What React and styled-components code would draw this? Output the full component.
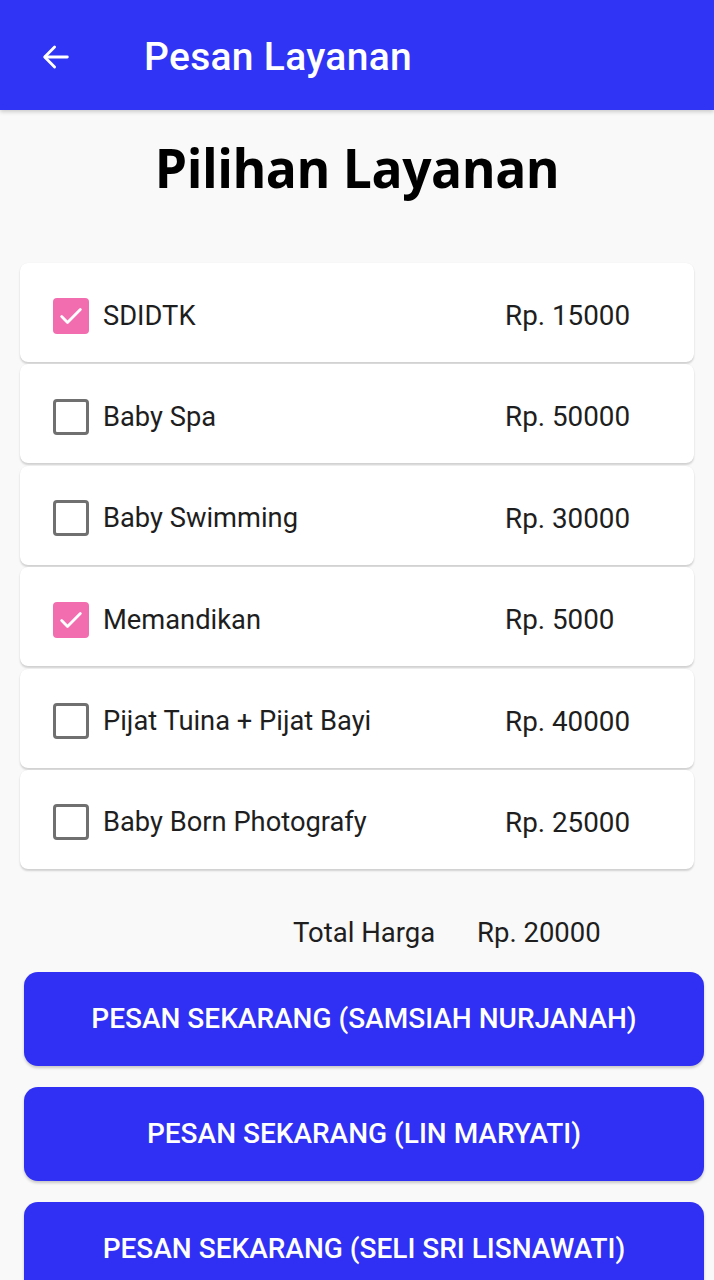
import React from "react";
import styled, { createGlobalStyle } from "styled-components";

const Global = createGlobalStyle`
  html, body { margin: 0; padding: 0; background: #f9f9f9; }
  body { font-family: Roboto, "Noto Sans", sans-serif; overflow: hidden; }
  * { box-sizing: border-box; }
`;

const Page = styled.div`
  width: 714px;
  height: 1280px;
  background: #f9f9f9;
  display: flex;
  flex-direction: column;
  overflow: hidden;
`;

const AppBar = styled.header`
  height: 110px;
  flex-shrink: 0;
  background: #3034f5;
  display: flex;
  align-items: center;
  padding-left: 38px;
  padding-top: 4px;
  box-shadow: 0 2px 4px rgba(0,0,0,0.18);
`;

const BackButton = styled.span`
  width: 36px;
  height: 36px;
  display: flex;
  align-items: center;
  justify-content: center;
  margin-right: 70px;
`;

const AppTitle = styled.h1`
  margin: 0;
  color: #fff;
  font-family: Roboto, sans-serif;
  font-weight: 500;
  font-size: 39px;
  letter-spacing: 0.3px;
`;

const Heading = styled.h2`
  margin: 20px 0 0;
  text-align: center;
  font-family: "Open Sans", Lato, sans-serif;
  font-weight: 700;
  font-size: 54px;
  color: #000;
  letter-spacing: -0.5px;
  transform: scaleX(0.955);
`;

const List = styled.div`
  margin: 59px 20px 0;
  display: flex;
  flex-direction: column;
  gap: 2.4px;
`;

const Card = styled.div`
  height: 99px;
  background: #fff;
  border-radius: 8px;
  box-shadow: 0 2px 2px rgba(0,0,0,0.16), 0 0 1px rgba(0,0,0,0.08);
  display: flex;
  align-items: center;
  padding-left: 33px;
  padding-top: 6px;
`;

const Box = styled.span`
  width: 36px;
  height: 36px;
  border-radius: 4px;
  flex-shrink: 0;
  display: flex;
  align-items: center;
  justify-content: center;
  background: ${p => (p.$checked ? "#f26cb0" : "transparent")};
  border: ${p => (p.$checked ? "none" : "3px solid #707070")};
`;

const Label = styled.span`
  margin-left: 14px;
  width: 402px;
  font-size: 27.3px;
  color: #1e1e1e;
  font-family: Roboto, sans-serif;
`;

const Price = styled.span`
  font-size: 27.8px;
  color: #1e1e1e;
  font-family: Roboto, sans-serif;
`;

const TotalRow = styled.div`
  margin-top: 47px;
  display: flex;
  padding-left: 293px;
  font-size: 27.5px;
  color: #1e1e1e;
  height: 36px;
  align-items: center;
`;

const TotalLabel = styled.span`
  width: 184px;
`;

const Buttons = styled.div`
  margin: 23px 10px 0 24px;
  display: flex;
  flex-direction: column;
  gap: 21px;
`;

const OrderButton = styled.button`
  height: 94px;
  flex-shrink: 0;
  border: none;
  border-radius: 14px;
  background: #3030f5;
  color: #fff;
  font-family: Roboto, sans-serif;
  font-weight: 500;
  font-size: 28px;
  text-transform: uppercase;
  box-shadow: 0 2px 3px rgba(0,0,0,0.2);
`;

const items = [
  { name: "SDIDTK", price: "Rp. 15000", checked: true },
  { name: "Baby Spa", price: "Rp. 50000" },
  { name: "Baby Swimming", price: "Rp. 30000" },
  { name: "Memandikan", price: "Rp. 5000", checked: true },
  { name: "Pijat Tuina + Pijat Bayi", price: "Rp. 40000" },
  { name: "Baby Born Photografy", price: "Rp. 25000" },
];

const buttons = [
  "Pesan Sekarang (Samsiah Nurjanah)",
  "Pesan Sekarang (Lin Maryati)",
  "Pesan Sekarang (Seli Sri Lisnawati)",
];

export default function App() {
  return (
    <Page>
      <Global />
      <AppBar>
        <BackButton>
          <svg width="34" height="34" viewBox="0 0 24 24" fill="none" stroke="#fff" strokeWidth="2" strokeLinecap="round" strokeLinejoin="round">
            <path d="M20 12H4.5" />
            <path d="M11 5l-7 7 7 7" />
          </svg>
        </BackButton>
        <AppTitle>Pesan Layanan</AppTitle>
      </AppBar>
      <Heading>Pilihan Layanan</Heading>
      <List>
        {items.map(it => (
          <Card key={it.name}>
            <Box $checked={it.checked}>
              {it.checked && (
                <svg width="28" height="28" viewBox="0 0 24 24" fill="none" stroke="#fff" strokeWidth="2.4" strokeLinecap="round" strokeLinejoin="round">
                  <path d="M4 12.5l5 5L20 6.5" />
                </svg>
              )}
            </Box>
            <Label>{it.name}</Label>
            <Price>{it.price}</Price>
          </Card>
        ))}
      </List>
      <TotalRow>
        <TotalLabel>Total Harga</TotalLabel>
        <span>Rp. 20000</span>
      </TotalRow>
      <Buttons>
        {buttons.map(b => (
          <OrderButton key={b}>{b}</OrderButton>
        ))}
      </Buttons>
    </Page>
  );
}
